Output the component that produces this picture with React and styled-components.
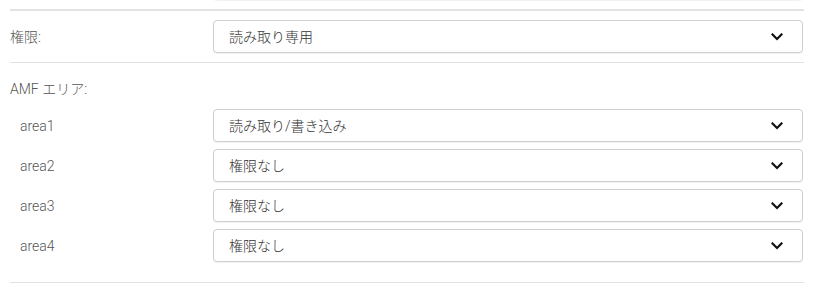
import React from "react";
import styled, { createGlobalStyle } from "styled-components";

const GlobalStyle = createGlobalStyle`
  html, body {
    margin: 0;
    padding: 0;
    background: #fff;
  }
  body {
    font-family: Roboto, "Noto Sans CJK JP", sans-serif;
    font-size: 14px;
    font-weight: 300;
    color: #333;
    overflow: hidden;
  }
`;

const areas = [
  { name: "area1", value: "読み取り/書き込み" },
  { name: "area2", value: "権限なし" },
  { name: "area3", value: "権限なし" },
  { name: "area4", value: "権限なし" },
];

function Chevron() {
  return (
    <svg width="12" height="8" viewBox="0 0 12 8">
      <polyline
        points="1.5,1.5 6,6 10.5,1.5"
        fill="none"
        stroke="#111"
        strokeWidth="2.2"
        strokeLinecap="square"
      />
    </svg>
  );
}

function Select({ value }) {
  return (
    <SelectBox>
      <SelectText>{value}</SelectText>
      <Chevron />
    </SelectBox>
  );
}

export default function App() {
  return (
    <>
      <GlobalStyle />
      <Form>
        <Row>
          <Label />
          <Select value="" />
        </Row>
        <Row divided>
          <Label>権限:</Label>
          <Select value="読み取り専用" />
        </Row>
        <Section>
          <SectionTitle>AMF エリア:</SectionTitle>
          <AreaList>
            {areas.map((a) => (
              <AreaRow key={a.name}>
                <Label indent>{a.name}</Label>
                <Select value={a.value} />
              </AreaRow>
            ))}
          </AreaList>
        </Section>
        <Divider />
      </Form>
    </>
  );
}

const Form = styled.div`
  margin-top: -33px;
  padding: 0 10px;
`;

const Row = styled.div`
  display: flex;
  align-items: center;
  padding: 9px 0 9px;
  border-top: ${(p) => (p.divided ? "1px solid #e3e3e3" : "none")};
  border-bottom: 1px solid #e3e3e3;
  &:first-child {
    padding-top: 0;
  }
`;

const Label = styled.div`
  width: ${(p) => (p.indent ? "193px" : "203px")};
  padding-left: ${(p) => (p.indent ? "10px" : "0")};
  flex-shrink: 0;
  color: #555;
  line-height: 20px;
`;

const SelectBox = styled.div`
  flex: 1;
  height: 33px;
  box-sizing: border-box;
  margin-right: 1px;
  display: flex;
  align-items: center;
  justify-content: space-between;
  padding: 0 19px 0 15px;
  border: 1px solid #cfcfcf;
  border-radius: 4px;
  box-shadow: 0 1px 1px rgba(0, 0, 0, 0.06);
  background: #fff;
`;

const SelectText = styled.span`
  color: #333;
  line-height: 20px;
`;

const Section = styled.div`
  padding: 16px 0 20px;
`;

const SectionTitle = styled.div`
  color: #555;
  line-height: 20px;
  margin-bottom: 10px;
`;

const AreaList = styled.div`
  display: flex;
  flex-direction: column;
  gap: 7px;
`;

const AreaRow = styled.div`
  display: flex;
  align-items: center;
`;

const Divider = styled.div`
  border-top: 1px solid #e3e3e3;
`;
